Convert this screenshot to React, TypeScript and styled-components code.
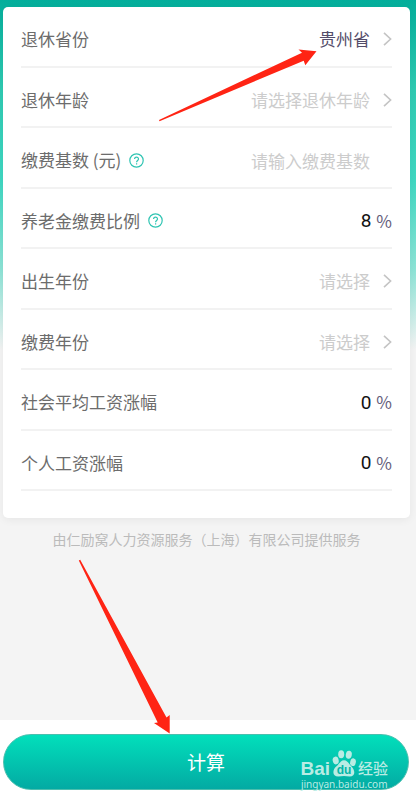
import React from "react";
import styled, { createGlobalStyle } from "styled-components";

const GlobalStyle = createGlobalStyle`
  *, *::before, *::after { box-sizing: border-box; }
  body {
    margin: 0;
    background: #f4f4f4;
    font-family: "Noto Sans CJK SC", "Noto Sans", sans-serif;
  }
  button, input, select { font-family: inherit; }
`;

const Page = styled.div`
  position: relative;
  display: flex;
  flex-direction: column;
  min-height: 100vh;
  background: #f4f4f4 linear-gradient(180deg, #03ae9b 0, #2fcbb3 90px, #3fd8c2 180px, #8ee4d7 270px, #f4f4f4 350px) no-repeat;
`;

const Card = styled.form`
  margin: 7px 6px 0 3px;
  padding: 0 18px 27px;
  border-radius: 5px;
  background: #fff;
  box-shadow: 0 2px 8px rgba(0, 0, 0, 0.06);
`;

const Rows = styled.div`
  display: grid;
  grid-auto-rows: 1fr;
  min-height: 484px;
`;

const Row = styled.div`
  display: flex;
  align-items: center;
  padding-top: 6px;
  border-bottom: 2px solid #f2f2f2;
`;

const Label = styled.label`
  flex: none;
  font-size: 17px;
  line-height: 26px;
  color: #6c6c6c;
`;

const HelpButton = styled.button`
  display: flex;
  flex: none;
  margin-left: 8px;
  padding: 0;
  border: 0;
  background: none;
  color: #2fc4b2;
`;

const Field = styled.div`
  display: flex;
  flex: 1;
  align-items: center;
  justify-content: flex-end;
  min-width: 0;
`;

const Select = styled.select<{ $chosen: boolean }>`
  flex: 1;
  min-width: 0;
  height: 26px;
  margin-right: 13px;
  padding: 0;
  border: 0;
  outline: 0;
  appearance: none;
  background: none;
  font-size: 17px;
  line-height: 26px;
  text-align: right;
  text-align-last: right;
  color: ${(p) => (p.$chosen ? "#544d6a" : "#ccc")};
`;

const TextInput = styled.input`
  flex: 1;
  width: 0;
  min-width: 0;
  height: 26px;
  margin-right: 22px;
  padding: 0;
  border: 0;
  outline: 0;
  background: none;
  font-size: 17px;
  text-align: right;
  color: #544d6a;
  &::placeholder { color: #ccc; opacity: 1; }
`;

const PercentInput = styled(TextInput)`
  margin-right: 5px;
  font-family: Roboto, sans-serif;
  font-size: 19px;
  color: #111;
`;

const Percent = styled.span`
  font-size: 17px;
  line-height: 26px;
  color: #655e7b;
`;

const Provider = styled.p`
  margin: 11px 3px 0 0;
  font-size: 14px;
  line-height: 20px;
  text-align: center;
  color: #bbb;
`;

const ActionBar = styled.footer`
  margin-top: auto;
  padding: 14px 7px 12px 3px;
  background: #fff;
`;

const SubmitButton = styled.button`
  display: block;
  width: 100%;
  height: 56px;
  padding: 0;
  border: 1px solid #4abfae;
  border-radius: 28px;
  background: linear-gradient(180deg, #02dfbb, #03aaa3);
  color: #fff;
  font-size: 19px;
  line-height: 28px;
`;

const Annotations = styled.svg`
  position: absolute;
  top: 0;
  left: 0;
  pointer-events: none;
`;

const Watermark = styled.div`
  position: absolute;
  right: 28px;
  bottom: 11px;
  display: flex;
  flex-direction: column;
  align-items: center;
  color: #b9ece4;
  pointer-events: none;
`;

const Brand = styled.div`
  display: flex;
  align-items: flex-end;
  gap: 2px;
`;

const BrandLatin = styled.span`
  font: bold 19px/16px "Liberation Sans", sans-serif;
`;

const BrandChinese = styled.span`
  font-size: 15px;
  font-weight: 500;
  line-height: 18px;
`;

const SiteName = styled.span`
  font: 10px/14px "Noto Sans", sans-serif;
`;

const Chevron = () => (
  <svg width="9" height="14" viewBox="0 0 9 14" fill="none" stroke="#c4c4c4" strokeWidth="1.6" aria-hidden="true">
    <path d="M1 .8 7.600 7 1 13.200" />
  </svg>
);

const HelpIcon = () => (
  <svg width="15" height="15" viewBox="0 0 15 15" fill="none" stroke="currentColor" strokeWidth="1.2" aria-hidden="true">
    <circle cx="7.5" cy="7.5" r="6.7" />
    <path d="M5.6 6.1C5.6 3.5 9.5 3.5 9.5 6c0 1.5-1.9 1.5-1.9 3.2" />
    <path d="M7.6 10.2v1.2" />
  </svg>
);

const Paw = () => (
  <svg width="24" height="27" viewBox="0 0 24 27" fill="currentColor" aria-hidden="true">
    <ellipse cx="3.7" cy="10.5" rx="3" ry="3.900" transform="rotate(-12 3.7 10.5)" />
    <ellipse cx="9.2" cy="4.2" rx="3" ry="4" />
    <ellipse cx="16.8" cy="4.8" rx="3" ry="4" transform="rotate(10 16.8 4.8)" />
    <ellipse cx="21" cy="12.2" rx="2.8" ry="3.9" transform="rotate(14 21 12.2)" />
    <path d="M12 10.200c3.500 0 4.600 3.500 7.300 6.100 3.900 3.700 4.600 10.200-1.600 10.200-2 0-3.700-.5-5.700-.5s-3.700.5-5.700.5c-6.200 0-6.200-6.500-1.800-10.200C7.500 13.800 8.500 10.200 12 10.200Z" />
    <text x="12" y="24" textAnchor="middle" fontFamily="Liberation Sans, sans-serif" fontSize="12" fontWeight="700" fill="#04b5a8">du</text>
  </svg>
);

type RowData = {
  id: string;
  label: string;
  kind: "select" | "text" | "percent";
  help?: boolean;
  value?: string;
  hint?: string;
};

const rows: RowData[] = [
  { id: "province", label: "退休省份", kind: "select", value: "贵州省" },
  { id: "age", label: "退休年龄", kind: "select", hint: "请选择退休年龄" },
  { id: "base", label: "缴费基数 (元)", kind: "text", help: true, hint: "请输入缴费基数" },
  { id: "ratio", label: "养老金缴费比例", kind: "percent", help: true, value: "8" },
  { id: "birth", label: "出生年份", kind: "select", hint: "请选择" },
  { id: "start", label: "缴费年份", kind: "select", hint: "请选择" },
  { id: "social", label: "社会平均工资涨幅", kind: "percent", value: "0" },
  { id: "personal", label: "个人工资涨幅", kind: "percent", value: "0" },
];

function Control({ row }: { row: RowData }) {
  if (row.kind === "select") {
    return (
      <>
        <Select id={row.id} $chosen={Boolean(row.value)}>
          <option>{row.value ?? row.hint}</option>
        </Select>
        <Chevron />
      </>
    );
  }
  if (row.kind === "percent") {
    return (
      <>
        <PercentInput id={row.id} inputMode="decimal" defaultValue={row.value} />
        <Percent>%</Percent>
      </>
    );
  }
  return <TextInput id={row.id} inputMode="decimal" placeholder={row.hint} />;
}

export default function App() {
  return (
    <Page>
      <GlobalStyle />
      <Card id="pension" onSubmit={(e) => e.preventDefault()}>
        <Rows>
          {rows.map((row) => (
            <Row key={row.id}>
              <Label htmlFor={row.id}>{row.label}</Label>
              {row.help && (
                <HelpButton type="button" aria-label={`${row.label}说明`}>
                  <HelpIcon />
                </HelpButton>
              )}
              <Field>
                <Control row={row} />
              </Field>
            </Row>
          ))}
        </Rows>
      </Card>
      <Provider>由仁励窝人力资源服务（上海）有限公司提供服务</Provider>
      <ActionBar>
        <SubmitButton type="submit" form="pension">计算</SubmitButton>
      </ActionBar>
      <Watermark>
        <Brand>
          <BrandLatin>Bai</BrandLatin>
          <Paw />
          <BrandChinese>经验</BrandChinese>
        </Brand>
        <SiteName>jingyan.baidu.com</SiteName>
      </Watermark>
      <Annotations width="320" height="736" viewBox="0 0 320 736" fill="#ff2414" aria-hidden="true">
        <path d="M159 120 302 52.700 298.500 49.500 316.500 51.300 305.300 65.200 303.700 60.700 159.500 121.300Z" />
        <path d="M80.200 559.700 166.500 717.500 169.700 715 169.700 733.500 154 723 157.700 722.500 78.800 560.500Z" />
      </Annotations>
    </Page>
  );
}
